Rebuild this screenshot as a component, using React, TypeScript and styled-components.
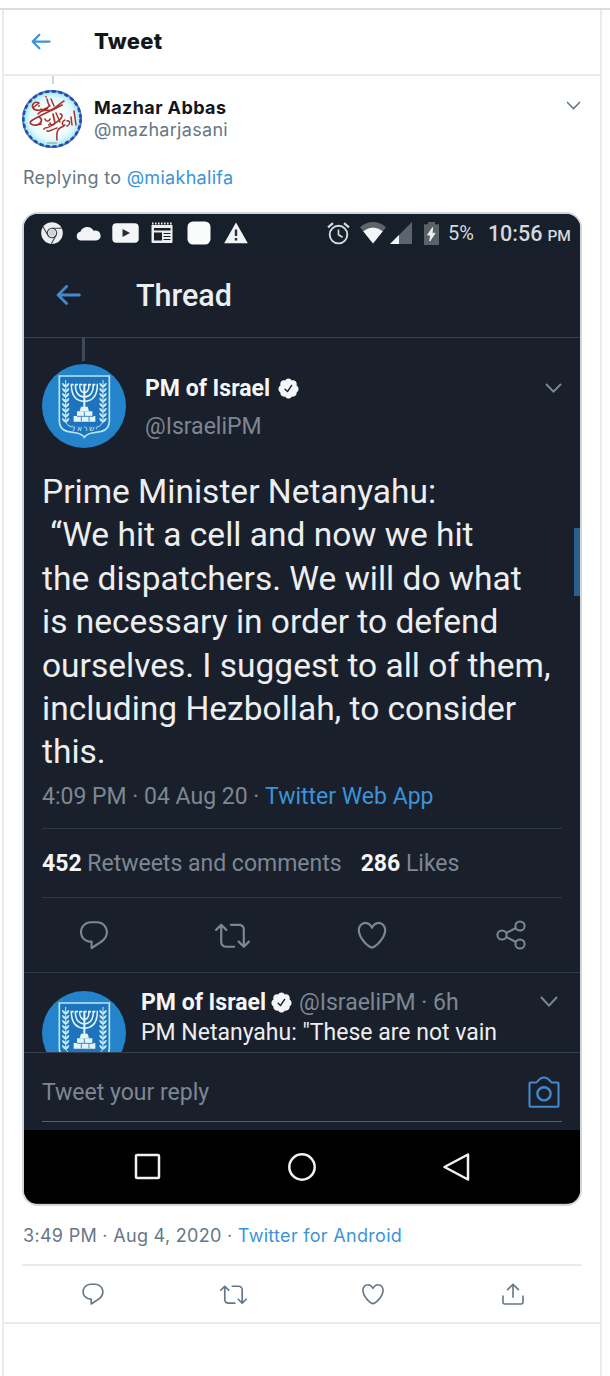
import React from "react";
import styled, { createGlobalStyle } from "styled-components";

const GlobalStyle = createGlobalStyle`
  * { box-sizing: border-box; }
  html, body { margin: 0; padding: 0; background: #fff; overflow: hidden; }
  svg { display: block; flex: none; }
`;

const Page = styled.div`
  width: 610px;
  height: 1376px;
  padding-top: 8px;
  overflow: hidden;
  background: #fff;
  font-family: Inter, "Liberation Sans", sans-serif;
`;

const TopRule = styled.div`
  height: 2px;
  background: #dcdce1;
`;

const Column = styled.main`
  width: 600px;
  height: 1366px;
  margin-left: 2px;
  border: solid #e6ecf0;
  border-width: 0 2px;
`;

const Header = styled.header`
  display: flex;
  align-items: center;
  gap: 40px;
  height: 66px;
  padding: 0 0 2px 23px;
  border-bottom: 2px solid #e6ecf0;
`;

const Title = styled.h1`
  margin: 0;
  font-size: 22px;
  line-height: 28px;
  font-weight: 800;
  letter-spacing: 0.3px;
  color: #14171a;
`;

const Tweet = styled.article`
  padding: 0 18px;
`;

const ThreadLine = styled.div<{ $dark?: boolean }>`
  width: ${(p) => (p.$dark ? 3 : 2)}px;
  height: ${(p) => (p.$dark ? 23 : 8)}px;
  margin-left: ${(p) => (p.$dark ? 40 : 30)}px;
  background: ${(p) => (p.$dark ? "#3f4a58" : "#ccd6dd")};
`;

const Author = styled.div`
  display: flex;
  margin-top: 6px;
  height: 58px;
`;

const Names = styled.div`
  flex: 1;
  margin-left: 12px;
  padding-top: 7px;
`;

const Line = styled.div<{ $bold?: boolean; $track?: number }>`
  font-size: 18px;
  line-height: 22px;
  white-space: nowrap;
  letter-spacing: ${(p) => p.$track ?? 0}px;
  font-weight: ${(p) => (p.$bold ? 700 : 400)};
  color: ${(p) => (p.$bold ? "#14171a" : "#657786")};
`;

const Link = styled.span`
  color: #3b94d9;
`;

const Replying = styled(Line)`
  margin: 19px 0 0 1px;
`;

const MenuSlot = styled.div<{ $top: number; $right: number }>`
  padding: ${(p) => p.$top}px ${(p) => p.$right}px 0 0;
`;

const Photo = styled.section`
  width: 560px;
  height: 994px;
  margin-top: 23px;
  border: 2px solid #ccd6dd;
  border-radius: 16px;
  overflow: hidden;
  background: #1a202b;
  color: #e9ebee;
  font-family: Roboto, "Liberation Sans", sans-serif;
`;

const StatusBar = styled.div`
  display: flex;
  align-items: center;
  height: 38px;
  padding-left: 17px;
  background: #17202a;
`;

const Slot = styled.div<{ $left: number }>`
  margin-left: ${(p) => p.$left}px;
`;

const StatusText = styled.span<{ $size: number; $weight?: number; $left: number; $drop?: number; $track?: number }>`
  font-size: ${(p) => p.$size}px;
  font-weight: ${(p) => p.$weight ?? 400};
  letter-spacing: ${(p) => p.$track ?? 0}px;
  line-height: 24px;
  margin-left: ${(p) => p.$left}px;
  padding-top: ${(p) => p.$drop ?? 0}px;
  color: #d5d8dc;
`;

const ThreadHeader = styled.div`
  display: flex;
  align-items: center;
  gap: 51px;
  height: 86px;
  padding-left: 27px;
  border-bottom: 1px solid #38424d;
`;

const ThreadTitle = styled.h2`
  margin: 2px 0 0;
  font-size: 30.5px;
  line-height: 36px;
  font-weight: 500;
  color: #eceef0;
`;

const Detail = styled.div`
  padding: 0 18px;
`;

const DarkAuthor = styled.div`
  display: flex;
  margin-top: 3px;
  height: 84px;
`;

const DarkNames = styled.div`
  flex: 1;
  margin-left: 19px;
  padding-top: 5px;
`;

const DarkLine = styled.div<{ $height: number; $size?: number; $track?: number; $color?: string }>`
  display: flex;
  align-items: center;
  height: ${(p) => p.$height}px;
  font-size: ${(p) => p.$size ?? 23}px;
  letter-spacing: ${(p) => p.$track ?? 0}px;
  color: ${(p) => p.$color ?? "#7d8793"};
  white-space: pre;
`;

const Strong = styled.b<{ $track?: number }>`
  font-weight: 700;
  letter-spacing: ${(p) => p.$track ?? 0}px;
  color: #f5f6f7;
`;

const BodyWrap = styled.div`
  display: flex;
  justify-content: space-between;
  margin: 22px -18px 0 0;
`;

const Body = styled.div`
  height: 304px;
`;

const BodyLine = styled.div<{ $track: number }>`
  font-size: 33.5px;
  line-height: 43.4px;
  letter-spacing: ${(p) => p.$track}px;
  white-space: pre;
  color: #eceef0;
`;

const ScrollMark = styled.div`
  width: 6px;
  height: 68px;
  margin-top: 58px;
  background: #2d5f8d;
`;

const Stamp = styled.div`
  height: 55px;
  padding-top: 8px;
  border-bottom: 1px solid #303944;
`;

const Stats = styled.div`
  display: flex;
  align-items: center;
  height: 69px;
  padding-bottom: 0;
  border-bottom: 1px solid #303944;
`;

const Actions = styled.div<{ $height: number }>`
  display: grid;
  grid-template-columns: repeat(4, 1fr);
  place-items: center;
  height: ${(p) => p.$height}px;
  border-bottom: 1px solid #303944;
`;

const OuterActions = styled(Actions)`
  margin: 0 -18px;
  padding: 0 17px 0 19px;
  border-bottom: 2px solid #e6ecf0;
`;

const NextTweet = styled.div`
  display: flex;
  height: 80px;
  padding: 14px 18px 0;
  overflow: hidden;
  border-bottom: 1px solid #38424d;
`;

const NextAvatar = styled.div`
  padding-top: 4px;
  margin-right: 15px;
`;

const NextText = styled.div`
  flex: 1;
`;

const ReplyBar = styled.div`
  height: 77px;
  padding: 0 18px;
`;

const ReplyField = styled.div`
  display: flex;
  align-items: center;
  justify-content: space-between;
  height: 69px;
  padding: 10px 2px 0 0;
  border-bottom: 1px solid #56606b;
`;

const NavBar = styled.div`
  display: flex;
  align-items: center;
  height: 73px;
  padding-left: 110px;
  background: #000;
`;

const Footer = styled.div`
  height: 60px;
  padding: 19px 0 0 1px;
  border-bottom: 2px solid #e6ecf0;
`;

const paths = {
  back: "M20 11H7.414l4.293-4.293c.39-.39.39-1.023 0-1.414s-1.023-.39-1.414 0l-6 6c-.39.39-.39 1.023 0 1.414l6 6c.195.195.45.293.707.293s.512-.098.707-.293c.39-.39.39-1.023 0-1.414L7.414 13H20c.553 0 1-.447 1-1s-.447-1-1-1z",
  reply:
    "M14.046 2.242l-4.148-.01h-.002c-4.374 0-7.8 3.427-7.8 7.802 0 4.098 3.186 7.206 7.465 7.37v3.828c0 .108.044.286.12.403.142.225.384.347.632.347.138 0 .277-.038.402-.118.264-.168 6.473-4.14 8.088-5.506 1.902-1.61 3.04-3.97 3.043-6.312v-.017c-.006-4.367-3.43-7.787-7.8-7.788zm3.787 12.972c-1.134.96-4.862 3.405-6.772 4.643V16.67c0-.414-.335-.75-.75-.75h-.396c-3.66 0-6.318-2.476-6.318-5.886 0-3.534 2.768-6.302 6.3-6.302l4.147.01h.002c3.532 0 6.3 2.766 6.302 6.296-.003 1.91-.942 3.844-2.514 5.176z",
  retweet:
    "M23.77 15.67c-.292-.293-.767-.293-1.06 0l-2.22 2.22V7.65c0-2.068-1.683-3.75-3.75-3.75h-5.85c-.414 0-.75.336-.75.75s.336.75.75.75h5.85c1.24 0 2.25 1.01 2.25 2.25v10.24l-2.22-2.22c-.293-.293-.768-.293-1.06 0s-.294.768 0 1.06l3.5 3.5c.145.147.337.22.53.22s.383-.072.53-.22l3.5-3.5c.294-.292.294-.767 0-1.06zm-10.66 3.28H7.26c-1.24 0-2.25-1.01-2.25-2.25V6.46l2.22 2.22c.148.147.34.22.532.22s.384-.073.53-.22c.293-.293.293-.768 0-1.06l-3.5-3.5c-.293-.294-.768-.294-1.06 0l-3.5 3.5c-.294.292-.294.767 0 1.06s.767.293 1.06 0l2.22-2.22V16.7c0 2.068 1.683 3.75 3.75 3.75h5.85c.414 0 .75-.336.75-.75s-.337-.75-.75-.75z",
  heart:
    "M12 21.638h-.014C9.403 21.59 1.95 14.856 1.95 8.478c0-3.064 2.525-5.754 5.403-5.754 2.29 0 3.83 1.58 4.646 2.73.814-1.148 2.354-2.73 4.645-2.73 2.88 0 5.404 2.69 5.404 5.755 0 6.376-7.454 13.11-10.037 13.157H12zM7.354 4.225c-2.08 0-3.903 1.988-3.903 4.255 0 5.74 7.034 11.596 8.55 11.658 1.518-.062 8.55-5.917 8.55-11.658 0-2.267-1.823-4.255-3.903-4.255-2.528 0-3.94 2.936-3.952 2.965-.23.562-1.156.562-1.387 0-.014-.03-1.425-2.965-3.954-2.965z",
  share:
    "M17.53 7.47l-5-5c-.293-.293-.768-.293-1.06 0l-5 5c-.294.293-.294.768 0 1.06s.767.294 1.06 0l3.72-3.72V15c0 .414.336.75.75.75s.75-.336.75-.75V4.81l3.72 3.72c.146.147.338.22.53.22s.384-.072.53-.22c.293-.293.293-.767 0-1.06zM19.708 21.944H4.292C3.028 21.944 2 20.916 2 19.652V14c0-.414.336-.75.75-.75s.75.336.75.75v5.652c0 .437.355.792.792.792h15.416c.437 0 .792-.355.792-.792V14c0-.414.336-.75.75-.75s.75.336.75.75v5.652c0 1.264-1.028 2.292-2.292 2.292z",
  verified:
    "M22.5 12.5c0-1.58-.875-2.95-2.148-3.6.154-.435.238-.905.238-1.4 0-2.21-1.71-3.998-3.818-3.998-.47 0-.92.084-1.336.25C14.818 2.415 13.51 1.5 12 1.5s-2.816.917-3.437 2.25c-.415-.165-.866-.25-1.336-.25-2.11 0-3.818 1.79-3.818 4 0 .494.083.964.237 1.4-1.272.65-2.147 2.018-2.147 3.6 0 1.495.782 2.798 1.942 3.486-.02.17-.032.34-.032.514 0 2.21 1.708 4 3.818 4 .47 0 .92-.086 1.335-.25.62 1.334 1.926 2.25 3.437 2.25 1.512 0 2.818-.916 3.437-2.25.415.163.865.248 1.336.248 2.11 0 3.818-1.79 3.818-4 0-.174-.012-.344-.033-.513 1.158-.687 1.943-1.99 1.943-3.484zm-6.616-3.334l-4.334 6.5c-.145.217-.382.334-.625.334-.143 0-.288-.04-.416-.126l-.115-.094-2.415-2.415c-.293-.293-.293-.768 0-1.06s.768-.294 1.06 0l1.77 1.767 3.825-5.74c.23-.345.696-.436 1.04-.207.346.23.44.696.21 1.04z",
};

const Icon = ({ name, size, color }: { name: keyof typeof paths; size: number; color: string }) => (
  <svg width={size} height={size} viewBox="0 0 24 24" fill={color}>
    <path d={paths[name]} />
  </svg>
);

const Chevron = ({ w, h, color, stroke }: { w: number; h: number; color: string; stroke: number }) => (
  <svg width={w} height={h} viewBox={`0 0 ${w} ${h}`} fill="none" stroke={color} strokeWidth={stroke}>
    <path d={`M1 1L${w / 2} ${h - 1.4}L${w - 1} 1`} />
  </svg>
);

const CalligraphyAvatar = () => (
  <svg width="60" height="58" viewBox="0 0 60 58">
    <defs>
      <radialGradient id="sky">
        <stop offset="0.45" stopColor="#fdfefe" />
        <stop offset="0.75" stopColor="#dff8fb" />
        <stop offset="1" stopColor="#8fdff0" />
      </radialGradient>
    </defs>
    <ellipse cx="30" cy="29" rx="30" ry="29" fill="url(#sky)" />
    <ellipse cx="30" cy="29" rx="29" ry="28" fill="none" stroke="#4b7fc4" strokeWidth="1.8" />
    <ellipse cx="30" cy="29" rx="28.6" ry="27.6" fill="none" stroke="#2a49a8" strokeWidth="2.6" strokeDasharray="4 2.6" />
    <g fill="none" stroke="#a5302c" strokeLinecap="round" strokeLinejoin="round">
      <path strokeWidth="1.6" d="M17 13c-4-2-8 1-6 5 2 3 8 3 14 0M17 13l-5 4" />
      <path strokeWidth="1.5" d="M19 19c3 2 6 0 8-3M25 9c1 3 1 6 3 7M29 9l3 7M42 11c-4 2-8 7-13 9-5 1-9-1-13 4" />
      <path strokeWidth="1.7" d="M40 15C31 20 18 25 9 31c-3 4 4 5 10 3M17 27c4 2 3 6-2 8M23 29c1 3 4 3 5 0M31 24l2 9c-2 3-5 2-5 0" />
      <path strokeWidth="1.5" d="M34 23l4 9M38 24c4 0 2 5-3 8-4 3-9 6-12 6M43 30c-3 1-4 6 0 5M45 31c4-1 3 4 0 5M49 27l1 8M52 21l2 14M42 36c-6 2-8 5-7 14M35 38c-4 1-7 4-10 3" />
    </g>
    <g fill="#a5302c">
      <circle cx="24" cy="6.8" r="0.9" />
      <circle cx="27" cy="35" r="0.9" />
      <circle cx="22" cy="39" r="0.9" />
      <circle cx="17" cy="16" r="0.9" />
    </g>
    <path d="M25 53h10" stroke="#7fa079" strokeWidth="1" />
  </svg>
);

const Laurel = ({ flip }: { flip?: boolean }) => (
  <g transform={flip ? "translate(254 0) scale(-1 1)" : undefined}>
    <path d="M71 48V168Q72 184 88 189" fill="none" stroke="#bfe6f3" strokeWidth="3" />
    {[0, 1, 2, 3, 4, 5, 6, 7].map((i) => (
      <path
        key={i}
        d={`M71 ${70 + i * 15}q-10 -3 -10 -12q9 2 10 12q10 -3 10 -12q-9 2 -10 12`}
        fill="#c6ebf4"
        stroke="#c6ebf4"
        strokeWidth="2"
      />
    ))}
  </g>
);

const EmblemAvatar = () => (
  <svg width="84" height="84" viewBox="0 0 252 252">
    <circle cx="126" cy="126" r="126" fill="#2484cb" />
    <path
      d="M52 36H202V170Q202 196 178 202L150 207Q134 210 127 220Q120 210 104 207L76 202Q52 196 52 170Z"
      fill="#1d74bc"
      stroke="#b9e7ee"
      strokeWidth="5"
    />
    <Laurel />
    <Laurel flip />
    <g fill="none" stroke="#e4f5f8" strokeWidth="4.5">
      <path d="M88 62Q88 110 127 112Q166 110 166 62" />
      <path d="M100 62Q100 97 127 99Q154 97 154 62" />
      <path d="M113 62Q113 84 127 86Q141 84 141 62" />
      <path d="M127 60V140" strokeWidth="6" />
      <path d="M86 62H168" strokeWidth="5" strokeDasharray="9 4" />
    </g>
    <path d="M117 128h20l4 14h-28z" fill="#e4f5f8" />
    <path d="M105 142h46v14h9v17H95v-17h10z" fill="#e4f5f8" />
    <path d="M105 157h50M127 143v13M118 158v14M141 158v14" stroke="#1d74bc" strokeWidth="2.5" />
    <text x="127" y="200" textAnchor="middle" fontFamily="DejaVu Sans, sans-serif" fontSize="23" fill="#c6ebf4" textLength="78">
      ישראל
    </text>
  </svg>
);

const ChromeIcon = () => (
  <svg width="22" height="22" viewBox="0 0 22 22">
    <circle cx="11" cy="11" r="10.8" fill="#eceef0" />
    <g fill="none" stroke="#3b4149" strokeWidth="1.1">
      <circle cx="11" cy="11" r="4.7" />
      <path d="M11 6.3H20.7M6.9 13.3L2.1 5M15.1 13.3L10.4 21.6" />
    </g>
    <circle cx="11" cy="11" r="3.5" fill="#cfd3d7" />
  </svg>
);

const CloudIcon = () => (
  <svg width="25" height="15" viewBox="0 0 25 15" fill="#f1f3f4">
    <path d="M4.6 14.5A4.4 4.4 0 0 1 4.4 5.8 7.2 7.2 0 0 1 17.6 4.8 5.2 5.2 0 0 1 24.6 9.5 4.6 4.6 0 0 1 20 14.5Z" />
  </svg>
);

const PlayIcon = () => (
  <svg width="27" height="20" viewBox="0 0 27 20">
    <rect x="0.3" y="0.3" width="26.4" height="19.4" rx="4" fill="#f4f5f6" />
    <path d="M10.5 6L18 10L10.5 14Z" fill="#262d37" />
  </svg>
);

const NewsIcon = () => (
  <svg width="22" height="22" viewBox="0 0 22 22">
    <path d="M1 1.5H21" stroke="#e4e7e9" strokeWidth="2" strokeDasharray="1.6 1.4" />
    <path d="M0.5 3H21.5V20a1 1 0 0 1-1 1H1.5a1 1 0 0 1-1-1Z" fill="#eceef0" />
    <path d="M3 7.3H19.5" stroke="#1a202b" strokeWidth="2.4" />
    <path d="M3 10.5H11V18.5H3Z" fill="#1a202b" />
    <path d="M12.5 11.5H19.5M12.5 14.5H19.5M12.5 17.5H19.5" stroke="#1a202b" strokeWidth="1" />
  </svg>
);

const BlankIcon = () => (
  <svg width="24" height="24" viewBox="0 0 24 24">
    <rect x="0.5" y="0.5" width="23" height="23" rx="5.5" fill="#fafbfb" />
  </svg>
);

const WarnIcon = () => (
  <svg width="24" height="22" viewBox="0 0 24 22">
    <path d="M12 0.5L23.8 21.3H0.2Z" fill="#f1f3f4" />
    <path d="M12 7.5V14M12 16V18.6" stroke="#262d37" strokeWidth="2.4" />
  </svg>
);

const AlarmIcon = () => (
  <svg width="23" height="23" viewBox="0 0 23 23" fill="none" stroke="#d9dcdf" strokeWidth="1.9">
    <circle cx="11.5" cy="12.6" r="8.8" />
    <path d="M11.5 7.5V12.8L15.6 15.3" strokeWidth="1.6" />
    <path d="M1 5.3L6 1.2M22 5.3L17 1.2" strokeWidth="2.2" />
  </svg>
);

const WifiIcon = () => (
  <svg width="26" height="22" viewBox="0 0 26 22">
    <path d="M0 5.2Q13-5 26 5.2L13 21.5Z" fill="#5d646c" />
    <path d="M3.2 9.2Q13 1.8 22.8 9.2L13 21.5Z" fill="#f4f5f6" />
  </svg>
);

const SignalIcon = () => (
  <svg width="22" height="22" viewBox="0 0 22 22">
    <path d="M22 0V22H0Z" fill="#5d646c" />
    <path d="M9 13V22H0Z" fill="#f4f5f6" />
  </svg>
);

const BatteryIcon = () => (
  <svg width="15" height="23" viewBox="0 0 15 23">
    <path d="M4 0H11V2.3H15V23H0V2.3H4Z" fill="#5a6168" />
    <path d="M8.6 5.5L3.6 13H6.6L5.8 19L11 11.3H8Z" fill="#eceef0" stroke="#eceef0" />
  </svg>
);

const NodesIcon = () => (
  <svg width="30" height="30" viewBox="0 0 30 30" fill="none" stroke="#7d8793" strokeWidth="2">
    <circle cx="24" cy="6" r="4.6" />
    <circle cx="6" cy="15" r="4.6" />
    <circle cx="24" cy="24" r="4.6" />
    <path d="M10.1 13L19.9 8M10.1 17L19.9 22" />
  </svg>
);

const CameraIcon = () => (
  <svg width="32" height="32" viewBox="0 0 32 32" fill="none" stroke="#4389cc" strokeWidth="2.1" strokeLinejoin="round">
    <path d="M2.5 6.5H8C10 6.500 10.500 1.500 16 1.500S22 6.500 24 6.500H29.500Q30.500 6.500 30.500 7.500V29.500Q30.500 30.700 29.500 30.700H2.500Q1.500 30.700 1.500 29.500V7.500Q1.500 6.500 2.500 6.500Z" />
    <circle cx="16" cy="17.800" r="6.600" strokeWidth="2.400" />
  </svg>
);

const bodyLines: [string, number][] = [
  ["Prime Minister Netanyahu:", 0],
  [" “We hit a cell and now we hit", 0],
  ["the dispatchers. We will do what", 0],
  ["is necessary in order to defend", 0],
  ["ourselves. I suggest to all of them,", 0],
  ["including Hezbollah, to consider", 0],
  ["this.", 0],
];

const PhoneScreenshot = () => (
  <Photo>
    <StatusBar>
      <ChromeIcon />
      <Slot $left={13}><CloudIcon /></Slot>
      <Slot $left={11}><PlayIcon /></Slot>
      <Slot $left={12}><NewsIcon /></Slot>
      <Slot $left={14}><BlankIcon /></Slot>
      <Slot $left={13}><WarnIcon /></Slot>
      <Slot $left={79}><AlarmIcon /></Slot>
      <Slot $left={10}><WifiIcon /></Slot>
      <Slot $left={4}><SignalIcon /></Slot>
      <Slot $left={12}><BatteryIcon /></Slot>
      <StatusText $left={9} $size={20}>5%</StatusText>
      <StatusText $left={14} $size={21.500} $weight={500} $drop={1}>10:56</StatusText>
      <StatusText $left={5} $size={15.500} $weight={500} $drop={5}>PM</StatusText>
    </StatusBar>
    <ThreadHeader>
      <Icon name="back" size={34} color="#4389cc" />
      <ThreadTitle>Thread</ThreadTitle>
    </ThreadHeader>
    <Detail>
      <ThreadLine $dark />
      <DarkAuthor>
        <EmblemAvatar />
        <DarkNames>
          <DarkLine $height={38}>
            <Strong>PM of Israel</Strong>
            <Slot $left={7}><Icon name="verified" size={23} color="#f5f6f7" /></Slot>
          </DarkLine>
          <DarkLine $height={38}>@IsraeliPM</DarkLine>
        </DarkNames>
        <MenuSlot $top={19} $right={0}>
          <Chevron w={17} h={10} color="#7d8793" stroke={2} />
        </MenuSlot>
      </DarkAuthor>
      <BodyWrap>
        <Body>
          {bodyLines.map(([text, track]) => (
            <BodyLine key={text} $track={track}>{text}</BodyLine>
          ))}
        </Body>
        <ScrollMark />
      </BodyWrap>
      <Stamp>
        <DarkLine $height={28}>
          4:09 PM · 04 Aug 20 · <Link>Twitter Web App</Link>
        </DarkLine>
      </Stamp>
      <Stats>
        <DarkLine $height={28}><Strong>452</Strong> Retweets and comments</DarkLine>
        <Slot $left={19}>
          <DarkLine $height={28}><Strong>286</Strong> Likes</DarkLine>
        </Slot>
      </Stats>
    </Detail>
    <Actions $height={75}>
      <Icon name="reply" size={34} color="#7d8793" />
      <Icon name="retweet" size={35} color="#7d8793" />
      <Icon name="heart" size={34} color="#7d8793" />
      <NodesIcon />
    </Actions>
    <NextTweet>
      <NextAvatar><EmblemAvatar /></NextAvatar>
      <NextText>
        <DarkLine $height={30}>
          <Strong>PM of Israel</Strong>
          <Slot $left={4}><Icon name="verified" size={23} color="#f5f6f7" /></Slot>
          <Slot $left={6}>@IsraeliPM · 6h</Slot>
        </DarkLine>
        <DarkLine $height={30} $color="#eceef0">PM Netanyahu: "These are not vain</DarkLine>
      </NextText>
      <MenuSlot $top={9} $right={4}>
        <Chevron w={18} h={11} color="#7d8793" stroke={2} />
      </MenuSlot>
    </NextTweet>
    <ReplyBar>
      <ReplyField>
        <DarkLine $height={28}>Tweet your reply</DarkLine>
        <CameraIcon />
      </ReplyField>
    </ReplyBar>
    <NavBar>
      <svg width="27" height="27" viewBox="0 0 27 27" fill="none" stroke="#f1f1f1" strokeWidth="2.500">
        <rect x="2" y="2" width="23" height="23" rx="1" />
      </svg>
      <Slot $left={126}>
        <svg width="30" height="30" viewBox="0 0 30 30" fill="none" stroke="#f1f1f1" strokeWidth="2.500">
          <circle cx="15" cy="15" r="12.700" />
        </svg>
      </Slot>
      <Slot $left={125}>
        <svg width="29" height="30" viewBox="0 0 29 30" fill="none" stroke="#f1f1f1" strokeWidth="2.500" strokeLinejoin="round">
          <path d="M2.500 15L26 2.500V27.500Z" />
        </svg>
      </Slot>
    </NavBar>
  </Photo>
);

export default function App() {
  return (
    <Page>
      <GlobalStyle />
      <TopRule />
      <Column>
        <Header>
          <Icon name="back" size={27} color="#3b94d9" />
          <Title>Tweet</Title>
        </Header>
        <Tweet>
          <ThreadLine />
          <Author>
            <CalligraphyAvatar />
            <Names>
              <Line $bold $track={0.4}>Mazhar Abbas</Line>
              <Line $track={0.3}>@mazharjasani</Line>
            </Names>
            <MenuSlot $top={11} $right={1}>
              <Chevron w={15} h={9} color="#657786" stroke={1.500} />
            </MenuSlot>
          </Author>
          <Replying $track={0.3}>
            Replying to <Link>@miakhalifa</Link>
          </Replying>
          <PhoneScreenshot />
          <Footer>
            <Line $track={0.3}>
              3:49 PM · Aug 4, 2020 · <Link>Twitter for Android</Link>
            </Line>
          </Footer>
          <OuterActions $height={58}>
            <Icon name="reply" size={26} color="#657786" />
            <Icon name="retweet" size={27} color="#657786" />
            <Icon name="heart" size={26} color="#657786" />
            <Icon name="share" size={26} color="#657786" />
          </OuterActions>
        </Tweet>
      </Column>
    </Page>
  );
}
